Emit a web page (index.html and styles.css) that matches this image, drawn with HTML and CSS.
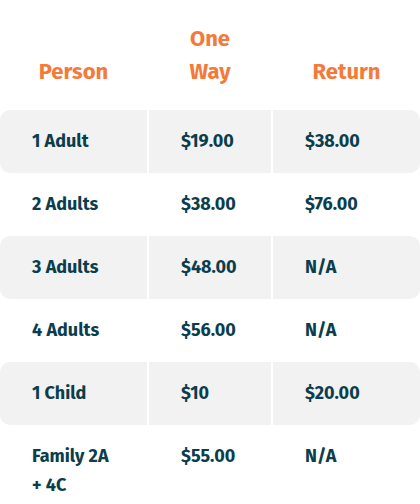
FILE: index.html
```html
<!DOCTYPE html>
<html>
<head>
<meta charset="utf-8">
<link rel="stylesheet" href="styles.css">
</head>
<body>
<div class="fares">
  <div class="row head">
    <div class="cell">Person</div>
    <div class="cell">One<br>Way</div>
    <div class="cell">Return</div>
  </div>
  <div class="row alt">
    <div class="cell">1 Adult</div>
    <div class="cell">$19.00</div>
    <div class="cell">$38.00</div>
  </div>
  <div class="row">
    <div class="cell">2 Adults</div>
    <div class="cell">$38.00</div>
    <div class="cell">$76.00</div>
  </div>
  <div class="row alt">
    <div class="cell">3 Adults</div>
    <div class="cell">$48.00</div>
    <div class="cell">N/A</div>
  </div>
  <div class="row">
    <div class="cell">4 Adults</div>
    <div class="cell">$56.00</div>
    <div class="cell">N/A</div>
  </div>
  <div class="row alt">
    <div class="cell">1 Child</div>
    <div class="cell">$10</div>
    <div class="cell">$20.00</div>
  </div>
  <div class="row">
    <div class="cell">Family 2A<br>+ 4C</div>
    <div class="cell">$55.00</div>
    <div class="cell">N/A</div>
  </div>
</div>
</body>
</html>
```
FILE: styles.css
```css
html, body {
  margin: 0;
  padding: 0;
  background: #ffffff;
}
body {
  font-family: "Fira Sans", Lato, "Noto Sans", sans-serif;
  font-weight: 700;
}
.fares {
  width: 420px;
}
.row {
  display: grid;
  grid-template-columns: 147px 122px 1fr;
  column-gap: 2px;
}
.cell {
  padding: 17px 20px 17px 32px;
  font-size: 18px;
  line-height: 29px;
  color: #0b3d4c;
}
.row.alt .cell {
  background: #f2f2f2;
}
.row.alt .cell:first-child {
  border-radius: 10px 0 0 10px;
}
.row.alt .cell:last-child {
  border-radius: 0 10px 10px 0;
}
.row.head {
  align-items: end;
  margin-bottom: 2px;
}
.row.head .cell {
  padding: 22px 0 20px 0;
  text-align: center;
  font-size: 22px;
  line-height: 33px;
  color: #f47a3a;
}
```
